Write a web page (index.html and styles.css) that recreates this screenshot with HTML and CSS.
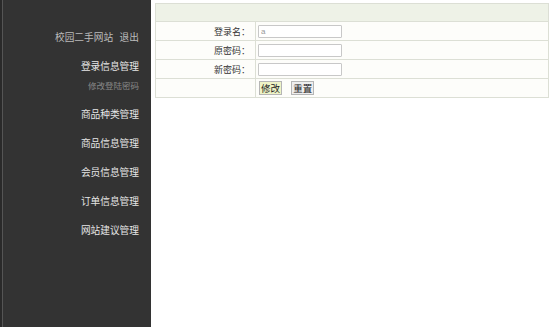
FILE: index.html
```html
<!DOCTYPE html>
<html lang="zh-CN">
<head>
    <meta charset="UTF-8">
    <title>修改登陆密码</title>
    <link rel="stylesheet" href="styles.css">
</head>
<body>
    <div class="page">
        <div class="sidebar">
            <div class="site">校园二手网站&nbsp;&nbsp;&nbsp;退出</div>
            <div class="menu-item">登录信息管理</div>
            <div class="sub-item">修改登陆密码</div>
            <div class="menu-item">商品种类管理</div>
            <div class="menu-item">商品信息管理</div>
            <div class="menu-item">会员信息管理</div>
            <div class="menu-item">订单信息管理</div>
            <div class="menu-item">网站建议管理</div>
        </div>

        <div class="main">
            <table class="form-table">
                <tr class="head">
                    <td colspan="2"></td>
                </tr>
                <tr>
                    <td class="label">登录名：</td>
                    <td class="value"><input type="text" class="field" value="a" readonly></td>
                </tr>
                <tr>
                    <td class="label">原密码：</td>
                    <td class="value"><input type="password" class="field"></td>
                </tr>
                <tr>
                    <td class="label">新密码：</td>
                    <td class="value"><input type="password" class="field"></td>
                </tr>
                <tr>
                    <td class="label"></td>
                    <td class="value">
                        <button class="btn btn-submit">修改</button>
                        <button class="btn btn-reset">重置</button>
                    </td>
                </tr>
            </table>
        </div>
    </div>
</body>
</html>
```

FILE: styles.css
```css
body {
    margin: 0;
    font-family: "Noto Sans CJK SC", "Liberation Sans", sans-serif;
    font-size: 9.7px;
    background-color: #fff;
}

.page {
    display: flex;
    height: 327px;
}

.sidebar {
    width: 151px;
    box-sizing: border-box;
    background-color: #333;
    border-left: 2px solid #2a2a2a;
    box-shadow: inset 1px 0 0 #555;
    padding: 28px 12px 0 0;
    text-align: right;
}

.site {
    color: #bbb;
    height: 19px;
    line-height: 19px;
    margin-bottom: 10px;
}

.menu-item {
    color: #e6e6e6;
    height: 19px;
    line-height: 19px;
    margin-bottom: 10px;
}

.sub-item {
    color: #888;
    font-size: 8.5px;
    height: 14px;
    line-height: 14px;
    margin: -8px 0 13px;
}

.main {
    flex: 1;
    padding: 3px 4px 0 4px;
}

.form-table {
    width: 100%;
    border-collapse: collapse;
    background-color: #fdfdfa;
}

.form-table td {
    border: 1px solid #dcdfd5;
    height: 18px;
    padding: 0;
}

.form-table .head td {
    background-color: #eef2e7;
    height: 17px;
}

.form-table .label {
    width: 94px;
    text-align: right;
    padding-right: 5px;
    font-size: 9px;
    color: #333;
}

.form-table .value {
    padding-left: 2px;
}

.field {
    display: block;
    width: 84px;
    height: 13px;
    box-sizing: border-box;
    border: 1px solid #c8c8c8;
    border-radius: 1px;
    padding: 0 2px;
    font-size: 8px;
    color: #999;
}

.btn {
    font-family: inherit;
    font-size: 9.5px;
    height: 14px;
    line-height: 12px;
    padding: 0 1px;
    margin-left: 1px;
    margin-right: 6px;
    border: 1px solid #b5b5b5;
    color: #222;
    cursor: pointer;
}

.btn-submit {
    background-color: #eef3c6;
}

.btn-reset {
    background-color: #eee;
}
```
